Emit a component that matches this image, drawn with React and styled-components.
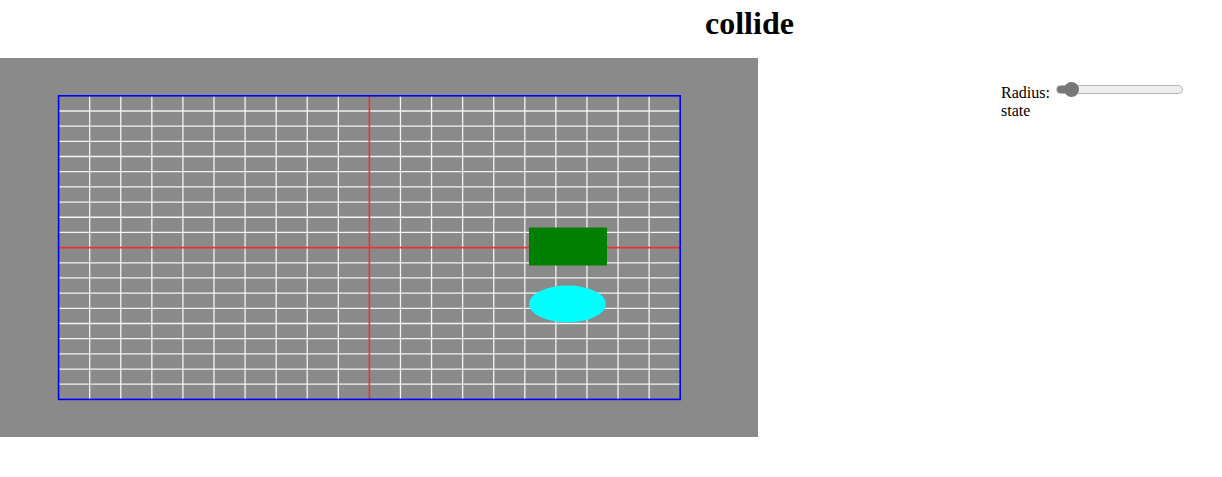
import styled, { createGlobalStyle } from 'styled-components';

const GlobalStyle = createGlobalStyle`
  html, body {
    margin: 0;
    padding: 0;
    background: #fff;
  }
  body {
    font-family: 'Liberation Serif', 'Times New Roman', serif;
    font-size: 16px;
    color: #000;
  }
`;

const Page = styled.div`
  display: flex;
  flex-direction: column;
`;

const Title = styled.h1`
  margin: 0 0 16px 0;
  padding: 5px 0 0 705px;
  font-size: 32px;
  line-height: 37px;
  font-weight: bold;
`;

const Main = styled.div`
  display: flex;
  align-items: flex-start;
`;

const Board = styled.svg`
  display: block;
  width: 758px;
  height: 379px;
  flex: none;
  background: #8a8a8a;
`;

const Controls = styled.div`
  margin-left: 243px;
  padding-top: 26px;
`;

const ControlRow = styled.div`
  white-space: nowrap;
`;

const RadiusSlider = styled.input`
  -webkit-appearance: none;
  appearance: none;
  box-sizing: border-box;
  width: 127px;
  height: 9px;
  margin: 0 0 0 2px;
  padding: 0 7px;
  vertical-align: 4px;
  border: 1px solid #b5b5b5;
  border-radius: 5px;
  background: linear-gradient(to right, #777 0, #777 15px, #efefef 15px);
  outline: none;

  &::-webkit-slider-thumb {
    -webkit-appearance: none;
    appearance: none;
    width: 15px;
    height: 15px;
    border-radius: 50%;
    background: #777;
    border: none;
  }
`;

// world grid: 20 x 20 cells, axes through the middle
const grid = { x: 58.6, y: 95.8, w: 621.6, h: 303.6, cells: 20 };

function GridBoard() {
  const stepX = grid.w / grid.cells;
  const stepY = grid.h / grid.cells;
  const lines = Array.from({ length: grid.cells + 1 }, (_, i) => i).filter(
    (i) => i !== 0 && i !== grid.cells && i !== grid.cells / 2
  );
  const midX = grid.x + grid.w / 2;
  const midY = grid.y + grid.h / 2;

  return (
    <Board viewBox="0 0 758 379" xmlns="http://www.w3.org/2000/svg">
      <g transform="translate(0,-58)">
        {lines.map((i) => (
          <line
            key={'v' + i}
            x1={grid.x + i * stepX}
            x2={grid.x + i * stepX}
            y1={grid.y}
            y2={grid.y + grid.h}
            stroke="#fff"
            strokeOpacity="0.9"
            strokeWidth="1.3"
          />
        ))}
        {lines.map((i) => (
          <line
            key={'h' + i}
            x1={grid.x}
            x2={grid.x + grid.w}
            y1={grid.y + i * stepY}
            y2={grid.y + i * stepY}
            stroke="#fff"
            strokeOpacity="0.9"
            strokeWidth="1.3"
          />
        ))}
        <line x1={midX} x2={midX} y1={grid.y} y2={grid.y + grid.h} stroke="#e83434" strokeWidth="1.6" />
        <line x1={grid.x} x2={grid.x + grid.w} y1={midY} y2={midY} stroke="#e83434" strokeWidth="1.6" />
        <rect x={grid.x} y={grid.y} width={grid.w} height={grid.h} fill="none" stroke="#0000ff" strokeWidth="1.6" />
        <rect x="529" y="227.5" width="78" height="38" fill="#008000" />
        <ellipse cx="567.5" cy="304" rx="38.5" ry="18.4" fill="#00ffff" />
      </g>
    </Board>
  );
}

export default function App() {
  return (
    <Page>
      <GlobalStyle />
      <Title>collide</Title>
      <Main>
        <GridBoard />
        <Controls>
          <ControlRow>
            Radius: <RadiusSlider type="range" min="0" max="100" defaultValue="0" />
          </ControlRow>
          <div>state</div>
        </Controls>
      </Main>
    </Page>
  );
}
